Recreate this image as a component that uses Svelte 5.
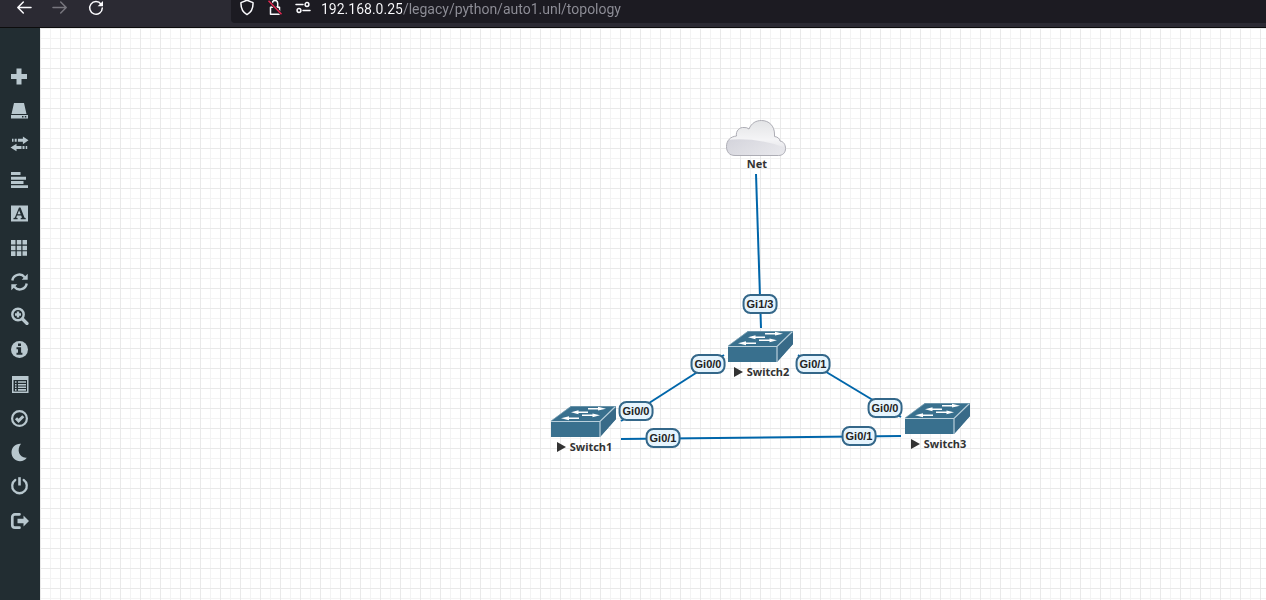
<script lang="ts">
  let address = $state('192.168.0.25/legacy/python/auto1.unl/topology');

  const toolGroups = [
    ['Add an object', 'Nodes', 'Networks', 'Startup-configs'],
    ['Configured objects', 'More actions', 'Refresh topology', 'Zoom', 'Status'],
    ['Lab details', 'Lock lab', 'Dark mode', 'Close lab', 'Logout']
  ];

  const switches = [
    { name: 'Switch1', x: 511, y: 378 },
    { name: 'Switch2', x: 688, y: 303 },
    { name: 'Switch3', x: 865, y: 375 }
  ];

  const links = [
    { x1: 716, y1: 146, x2: 721, y2: 300 },
    { x1: 581, y1: 393, x2: 684, y2: 327 },
    { x1: 758, y1: 327, x2: 861, y2: 389 },
    { x1: 581, y1: 411, x2: 861, y2: 408 }
  ];

  const ports = [
    { name: 'Gi1/3', x: 720, y: 276 },
    { name: 'Gi0/0', x: 668, y: 336 },
    { name: 'Gi0/1', x: 773, y: 336 },
    { name: 'Gi0/0', x: 596, y: 383 },
    { name: 'Gi0/1', x: 623, y: 410 },
    { name: 'Gi0/0', x: 845, y: 380 },
    { name: 'Gi0/1', x: 819, y: 408 }
  ];
</script>

<div class="app">
  <header>
    <div class="history">
      <button aria-label="Back">
        <svg viewBox="0 0 16 16"><path class="line" d="M15 7.5H2M7.3 2 1.8 7.5l5.5 5.5" /></svg>
      </button>
      <button aria-label="Forward" disabled>
        <svg viewBox="0 0 16 16"><path class="line" d="M1 7.5h13M8.7 2l5.5 5.5L8.7 13" /></svg>
      </button>
      <button aria-label="Reload">
        <svg viewBox="0 0 16 16"><path class="line" d="M13.1 4.2A6.3 6.3 0 1 0 14.3 8" /><path d="M15 1v5.2H9.6z" fill="currentColor" /></svg>
      </button>
    </div>
    <div class="address">
      <button aria-label="Tracking protection">
        <svg viewBox="0 0 16 16"><path class="line" d="M8 .2 14 2.6c.3 5.200-1.400 9.400-6 12C3.400 12 1.700 7.800 2 2.600z" /></svg>
      </button>
      <button aria-label="Connection not secure">
        <svg viewBox="0 0 16 16"><path class="line" d="M3.500 7.300h9v6.900h-9zM5.300 7V3.200a2.700 2.700 0 0 1 5.400 0V7" /><path d="m1.500.8 13 13.500" fill="none" stroke="#1c1b22" stroke-width="3" /><path d="m1.500.8 13 13.500" fill="none" stroke="#e22850" stroke-width="1.500" /></svg>
      </button>
      <button aria-label="Site permissions">
        <svg viewBox="0 0 16 16"><path class="line" d="M1 4.500h7M8 10.500h7" /><circle class="line" cx="12" cy="4.500" r="1.900" /><circle class="line" cx="4" cy="10.500" r="1.900" /></svg>
      </button>
      <input aria-label="Address" bind:value={address} spellcheck="false" />
    </div>
  </header>

  <div class="body">
    <nav aria-label="Lab tools">
      {#each toolGroups as group}
        <div class="group">
          {#each group as tool}
            <button aria-label={tool}>
              <svg viewBox="0 0 20 20" fill="currentColor">
                {#if tool === 'Add an object'}
                  <path d="M7.500 2.500h5v5.500H18v5h-5.500v5.500h-5V13H2V8h5.500z" />
                {:else if tool === 'Nodes'}
                  <path d="M5 3h10l2.500 11h-15zM2 15h17v3.500H2zm11 1v1.500h1.500V16zm2.800 0v1.500h1.500V16z" fill-rule="evenodd" />
                {:else if tool === 'Networks'}
                  <path d="M3 4.800h1.500v3H3zm2.700 0h2v3h-2zm3.200 0h5V2.500l5.600 3.800-5.600 3.900V7.800h-5zM1.500 13.500l6-3.800V12h5v3h-5v2.300zm12-1.500h2v3h-2zm3.200 0h1.500v3h-1.500z" />
                {:else if tool === 'Startup-configs'}
                  <path d="M2 4h9.500v3H2zm0 4.700h15v3H2zm0 4.300h12.500v3H2zm0 4.300h17v2.700H2z" />
                {:else if tool === 'Configured objects'}
                  <path d="M2 2.500h17v16H2z" /><path d="M4.500 16.200V15l1.300-.3L10 4.500h1.500l4 10.200 1.200.3v1.200h-5V15l1.300-.3-.8-2.200H8l-.8 2.200 1.400.3v1.200zM8.500 11.200h3.200l-1.600-4z" fill="#222d32" fill-rule="evenodd" />
                {:else if tool === 'More actions'}
                  <path d="M2 3h4.500v4.500H2zm5.800 0h4.500v4.500H7.800zm5.700 0H18v4.500h-4.500zM2 8.700h4.500v4.500H2zm5.800 0h4.500v4.500H7.800zm5.700 0H18v4.500h-4.500zM2 14.300h4.500V19H2zm5.800 0h4.500V19H7.800zm5.700 0H18v4.500h-4.500z" />
                {:else if tool === 'Refresh topology'}
                  <path d="M3.300 9.500a7 7 0 0 1 12.400-3.300M17.700 12.500a7 7 0 0 1-12.400 3.300" fill="none" stroke="currentColor" stroke-width="2.400" /><path d="M18.700 2.700v6h-6zM2.300 19.300v-6h6z" />
                {:else if tool === 'Zoom'}
                  <circle cx="9" cy="9.500" r="5.700" fill="none" stroke="currentColor" stroke-width="2.400" /><path d="m13.500 14 4.500 4.500" stroke="currentColor" stroke-width="3.200" stroke-linecap="round" /><path d="M7.800 6.500h2.400v1.800H12v2.400h-1.800v1.800H7.800v-1.800H6V8.300h1.800z" />
                {:else if tool === 'Status'}
                  <circle cx="10.500" cy="10.500" r="8.500" /><path d="M9 4.500h3V7H9zM7.500 8.300h4.600v5.400h1.300v2H7.500v-2H9v-3.400H7.500z" fill="#222d32" />
                {:else if tool === 'Lab details'}
                  <path d="M3 2h16.500v17H3zm1.500 4v11.500H18V6z" fill-rule="evenodd" /><path d="M6 7.200h1.500v1.600H6zm3 0h8v1.600H9zm-3 2.700h1.500v1.600H6zm3 0h8v1.600H9zm-3 2.600h1.500v1.600H6zm3 0h8v1.600H9zm-3 2.600h1.500v1.600H6zm3 0h8v1.600H9z" />
                {:else if tool === 'Lock lab'}
                  <circle cx="10.500" cy="10.500" r="7.400" fill="none" stroke="currentColor" stroke-width="2.200" /><path d="m7 10.300 2.600 2.600 4.700-4.600" fill="none" stroke="currentColor" stroke-width="3" />
                {:else if tool === 'Dark mode'}
                  <path d="M12 1.800c-5.500-.4-9.500 3.600-9.500 8.700 0 5 4 8.700 8.500 8.700 3 0 5.300-1.400 6.800-3.500C10.500 16.500 7 8 12 1.800z" />
                {:else if tool === 'Close lab'}
                  <path d="M6.300 4a7.300 7.300 0 1 0 8.400 0" fill="none" stroke="currentColor" stroke-width="2.300" stroke-linecap="round" /><path d="M9.200 1.200h2.600v8.300H9.200z" />
                {:else}
                  <path d="M10.500 4.300H6A2.700 2.700 0 0 0 3.300 7v8A2.700 2.700 0 0 0 6 17.700h4.500" fill="none" stroke="currentColor" stroke-width="2.700" stroke-linecap="round" /><path d="M8.500 8.700h6V5.400l5.500 5.600-5.500 5.600v-3.300h-6z" />
                {/if}
              </svg>
            </button>
          {/each}
        </div>
      {/each}
    </nav>

    <main>
      <svg class="links" aria-hidden="true">
        {#each links as link}
          <line {...link} />
        {/each}
      </svg>

      <div class="node net">
        <svg width="60" height="36" viewBox="0 0 60 36" aria-hidden="true">
          <defs>
            <linearGradient id="cloud" x1="0" y1="0" x2="0" y2="1">
              <stop offset="0" stop-color="#e3e4e6" /><stop offset=".55" stop-color="#f4f4f6" /><stop offset="1" stop-color="#dddde3" />
            </linearGradient>
            <linearGradient id="shade" x1="0" y1="0" x2="1" y2="1">
              <stop offset="0" stop-color="#c6c6d0" /><stop offset="1" stop-color="#f1f1f4" />
            </linearGradient>
            <clipPath id="outline"><path d="M9 35.500C3 35.500.5 31.500.5 26.500.5 20.500 4.500 16.500 10.500 16 9.500 11 13.500 7 18 7.500q3-.2 5 1.500C25.500 3 30 .5 35.500.5 43 .5 48.500 6 48.500 14v2.500c3.500.5 5 2 5.500 4.500 3.500.5 5.500 3.500 5.500 7.500 0 4.500-3 7-7 7z" /></clipPath>
          </defs>
          <path d="M9 35.500C3 35.500.5 31.500.5 26.500.5 20.500 4.500 16.500 10.500 16 9.500 11 13.500 7 18 7.500q3-.2 5 1.500C25.500 3 30 .5 35.500.5 43 .5 48.500 6 48.500 14v2.500c3.500.5 5 2 5.500 4.500 3.500.5 5.500 3.500 5.500 7.500 0 4.500-3 7-7 7z" fill="url(#cloud)" />
          <path d="M0 20q32-3 60 8v9H0z" fill="url(#shade)" opacity=".7" clip-path="url(#outline)" />
          <path d="M9 35.500C3 35.500.5 31.500.5 26.500.5 20.500 4.500 16.500 10.500 16 9.500 11 13.500 7 18 7.500q3-.2 5 1.500C25.500 3 30 .5 35.500.5 43 .5 48.500 6 48.500 14v2.500c3.500.5 5 2 5.500 4.500 3.500.5 5.500 3.500 5.500 7.500 0 4.500-3 7-7 7z" fill="none" stroke="#adadb5" />
        </svg>
        <span class="name">Net</span>
      </div>

      {#each switches as node}
        <div class="node" style="left: {node.x}px; top: {node.y}px">
          <svg width="65" height="33" viewBox="0 0 65 33" aria-hidden="true">
            <path d="M20 0h45v13L49 31H0V15z" fill="#39708e" />
            <path d="m49 15 16-15v13L49 31z" fill="#386a88" />
            <path d="M0 15.500h49L64.500.5M49 15.500V31" fill="none" stroke="#b9d0dc" stroke-width="1.200" />
            <path d="M0 15 20 .5h44" fill="none" stroke="#7fa3b6" stroke-width=".7" />
            <g stroke="#fff" stroke-width="1.400"><path d="M37 2.700h13M24 6.300h13M31 9.300h13M15 12.300h13" /></g>
            <path d="M47 .8 55 2.700l-8 1.900zM27.500 4.200 20 6.300l7.500 1.900zM41.500 7.400l7.500 1.900-7.500 1.900zM18 10.200l-8 2.100 8 1.900z" fill="#fff" />
          </svg>
          <span class="name">
            <svg width="9" height="10" viewBox="0 0 9 10" aria-hidden="true"><path d="M0 0v10l9-5z" /></svg>
            {node.name}
          </span>
        </div>
      {/each}

      {#each ports as port}
        <span class="port" style="left: {port.x}px; top: {port.y}px">{port.name}</span>
      {/each}
    </main>
  </div>
</div>

<style>
  :global(body) {
    margin: 0;
  }

  .app {
    display: flex;
    flex-direction: column;
    min-height: 100vh;
  }

  button {
    display: flex;
    padding: 0;
    border: 0;
    background: none;
    color: inherit;
    cursor: pointer;
  }

  header {
    display: flex;
    height: 27px;
    border-bottom: 1px solid #0c0c0d;
    background: #2b2a33;
    color: #fbfbfe;
  }

  header svg {
    width: 16px;
    height: 16px;
  }

  .line {
    fill: none;
    stroke: currentColor;
    stroke-width: 1.5;
    stroke-linecap: round;
    stroke-linejoin: round;
  }

  .history {
    display: flex;
    align-items: flex-start;
    gap: 20px;
    width: 215px;
    padding-left: 16px;
    flex-shrink: 0;
  }

  .history button:disabled {
    color: #77767e;
  }

  .address {
    display: flex;
    flex: 1;
    align-items: flex-start;
    gap: 12px;
    height: 23px;
    padding-left: 8px;
    border-radius: 0 0 0 4px;
    background: #1c1b22;
  }

  input {
    flex: 1;
    min-width: 0;
    height: 18px;
    margin-left: -2px;
    padding: 0;
    border: 0;
    outline: 0;
    background: linear-gradient(to right, #fbfbfe 81px, #8f8f98 81px);
    background-clip: text;
    color: transparent;
    caret-color: #fbfbfe;
    font: 14px/16px Roboto, sans-serif;
  }

  .body {
    display: flex;
    flex: 1;
  }

  nav {
    display: flex;
    flex-direction: column;
    gap: 1px;
    width: 40px;
    flex-shrink: 0;
    padding-top: 31px;
    background: #222d32;
    color: #b8c7ce;
  }

  .group button {
    align-items: center;
    width: 100%;
    height: 34px;
    padding-left: 9px;
  }

  nav svg {
    width: 20px;
    height: 20px;
  }

  main {
    position: relative;
    flex: 1;
    overflow: hidden;
    background:
      linear-gradient(#e9e9e9 1px, transparent 1px) 0 0 / 20px 20px,
      linear-gradient(90deg, #e9e9e9 1px, transparent 1px) 0 0 / 20px 20px,
      linear-gradient(#f3f3f3 1px, transparent 1px) 0 0 / 10px 10px,
      linear-gradient(90deg, #f3f3f3 1px, transparent 1px) 0 0 / 10px 10px,
      #fff;
  }

  .links {
    position: absolute;
    width: 100%;
    height: 100%;
  }

  .links line {
    stroke: #0066aa;
    stroke-width: 2;
  }

  .node {
    position: absolute;
    display: flex;
    flex-direction: column;
    align-items: center;
  }

  .net {
    left: 686px;
    top: 92px;
  }

  .name {
    display: flex;
    align-items: center;
    gap: 4px;
    padding-left: 2px;
    color: #333;
    font: bold 11px/16px "Noto Sans", sans-serif;
  }

  .name svg {
    fill: #333;
  }

  .port {
    position: absolute;
    padding: 2px 2px;
    border: 2px solid #346789;
    border-radius: 8px;
    background: #e6f4fd;
    color: #222;
    font: bold 11px/12px "Liberation Sans", Arial, sans-serif;
    transform: translate(-50%, -50%);
  }
</style>
